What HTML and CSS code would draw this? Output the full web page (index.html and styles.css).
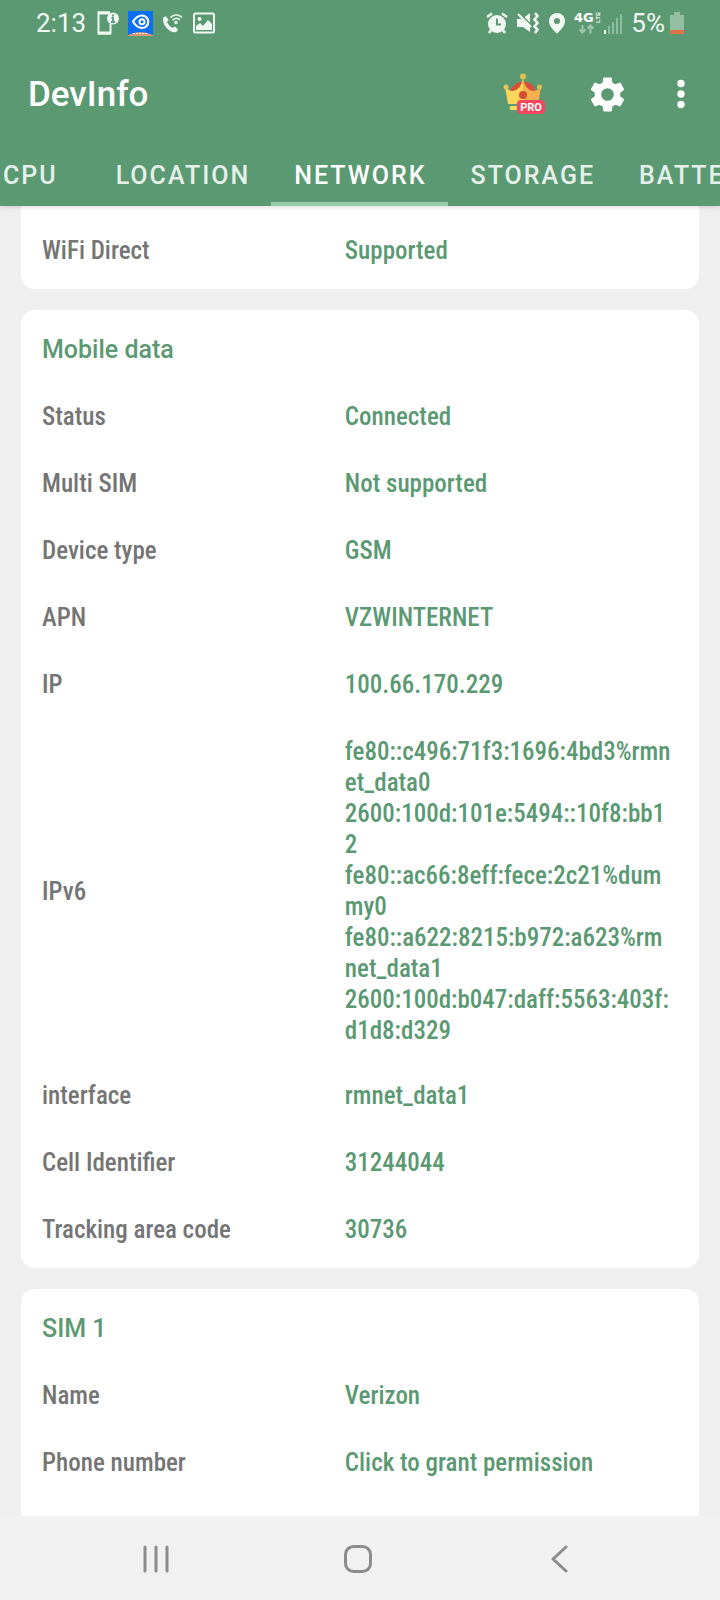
FILE: index.html
```
<!DOCTYPE html>
<html lang="en">
<head>
<meta charset="utf-8">
<meta name="viewport" content="width=device-width, initial-scale=1">
<title>DevInfo</title>
<link rel="stylesheet" href="styles.css">
</head>
<body>
<div class="screen">
  <header class="header">
    <div class="status">
      <span class="clock">2:13</span>
      <svg width="22" height="24" viewBox="0 0 22 24" aria-hidden="true"><path d="M13 1.500H1.500V22.500H13.500V13" fill="none" stroke="#f1f8f3" stroke-width="2"/><path d="M1 2H13M1 22H13" stroke="#f1f8f3" stroke-width="3"/><circle cx="16" cy="7.500" r="6" fill="#f1f8f3"/><path d="M16 3.500V5.500M14.500 7H16V11M14 11H18" stroke="#5b9973" stroke-width="1.800" fill="none"/></svg>
      <svg class="eye" width="25" height="25" viewBox="0 0 25 25" aria-hidden="true"><path d="M0 0H25V25H0Z" fill="#0a6ff2"/><path d="M5 10.500Q9 4.500 14 4.500A6 6 0 0 1 14 17Q9 17 5 10.500Z" fill="none" stroke="#fff" stroke-width="2.200"/><circle cx="14" cy="10.700" r="2.500" fill="none" stroke="#fff" stroke-width="2"/><path d="M0 25V24Q12 18 25 24V25Z" fill="#d99a76"/><path d="M5 22.500H20" stroke="#f5dccb" stroke-width="1" stroke-dasharray="2 1"/></svg>
      <svg class="call" width="21" height="20" viewBox="0 0 21 20" aria-hidden="true"><path d="M1.200 4.500 4 3.200 6.600 7.200 4.900 9.200Q7 13 10.600 15L12.700 13.400 16 16.200 14.600 18.800Q11 20.500 6.200 16.500 0 11 1.200 4.500Z" fill="#f1f8f3"/><g fill="none" stroke="#e0eee5" stroke-width="1.800"><path d="M8.500 4.500Q14-.500 20 4.200"/><path d="M10.500 7Q14 4 18 6.700"/></g><circle cx="14" cy="9.500" r="1.700" fill="#f1f8f3"/></svg>
      <svg width="22" height="22" viewBox="0 0 22 22" aria-hidden="true"><rect x="1" y="1.500" width="20" height="19" rx="1.500" fill="none" stroke="#f1f8f3" stroke-width="2"/><circle cx="6.500" cy="7" r="2" fill="#f1f8f3"/><path d="M3 18V14L7 11 10 14 15 8 19 12V18Z" fill="#f1f8f3"/></svg>
      <span class="spacer"></span>
      <svg width="22" height="22" viewBox="0 0 22 22" aria-hidden="true"><circle cx="11" cy="12" r="9" fill="#f1f8f3"/><path d="M1 5 6 1.500M21 5 16 1.500M5 18 3 21M17 18 19 21" stroke="#f1f8f3" stroke-width="2.500"/><path d="M11 6.500V12.500H15" stroke="#5b9973" stroke-width="2" fill="none"/></svg>
      <svg width="22" height="22" viewBox="0 0 22 22" aria-hidden="true"><path d="M0 7H5L13 1V20L6 15H0Z" fill="#f1f8f3"/><path d="M1 0 15 14" stroke="#5b9973" stroke-width="2"/><path d="M1 2 14 15" stroke="#f1f8f3" stroke-width="2.200"/><path d="M18 1 20.500 4 17.500 7.500 20.500 11 17.500 14.500 20.500 17.500 18 21" fill="none" stroke="#f1f8f3" stroke-width="2.500"/></svg>
      <svg class="pin" width="18" height="22" viewBox="0 0 18 22" aria-hidden="true"><path d="M9 1A8 8 0 0 0 1 9C1 14 5 18 9 21.500 13 18 17 14 17 9A8 8 0 0 0 9 1ZM9 6A3 3 0 1 1 9 12 3 3 0 0 1 9 6Z" fill="#f1f8f3" fill-rule="evenodd"/></svg>
      <svg class="lte" width="28" height="24" viewBox="0 0 28 24" aria-hidden="true"><text class="g4" x="0" y="11">4G</text><text class="g-lte" transform="translate(26 12) rotate(-90)">LTE</text><path d="M8.500 14V21M5.500 18.500 8.500 21.500 11.500 18.500M16.500 22.500V15M13.500 17.500 16.500 14.500 19.500 17.500" stroke="#9fc7ae" stroke-width="2" fill="none"/></svg>
      <svg width="18" height="21" viewBox="0 0 18 21" aria-hidden="true"><path d="M1 17V21" stroke="#fff" stroke-width="2"/><path d="M5 13V21M9 9V21M13 5V21M17 1V21" stroke="#8fbd9f" stroke-width="2"/></svg>
      <span class="percent">5%</span>
      <svg class="battery" width="14" height="22" viewBox="0 0 14 22" aria-hidden="true"><path d="M4 0H10V3H14V19H0V3H4Z" fill="#95bfa3"/><path d="M0 18H14V21Q14 22 13 22H1Q0 22 0 21Z" fill="#e07445"/></svg>
    </div>
    <div class="appbar">
      <h1 class="app-title">DevInfo</h1>
      <button class="icon-btn crown-btn" type="button" aria-label="Pro version">
        <svg width="42" height="42" viewBox="0 0 42 42" aria-hidden="true"><path d="M6 19Q12 8 20 8.500 29 8 34 19L30 28H9Z" fill="#d8503c"/><path d="M2 14 5 31H20V5Q18 17 10 18 6 18 2 14Z" fill="#fcd75b"/><path d="M38 14 35 31H20V5Q22 17 30 18 34 18 38 14Z" fill="#f4b04b"/><circle cx="20" cy="3.500" r="3" fill="#dfbf54"/><circle cx="3" cy="14" r="2.500" fill="#e5c75c"/><circle cx="36.500" cy="14" r="2.500" fill="#d9bd55"/><circle cx="20" cy="22" r="4" fill="#cf4f34"/><rect x="6.500" y="33" width="20" height="4" rx="2" fill="#f6dc61"/><rect x="14" y="27" width="28" height="14" rx="4" fill="#f5455f"/><text class="pro" x="28" y="38" text-anchor="middle">PRO</text></svg>
      </button>
      <button class="icon-btn gear-btn" type="button" aria-label="Settings">
        <svg width="41" height="41" viewBox="0 0 24 24" aria-hidden="true"><path fill="#fff" d="M19.430 12.980c.040-.320.070-.640.070-.980s-.030-.660-.070-.980l2.110-1.650c.190-.150.240-.420.120-.640l-2-3.460c-.120-.220-.390-.300-.610-.220l-2.490 1c-.520-.400-1.080-.730-1.690-.980l-.380-2.650C14.460 2.180 14.250 2 14 2h-4c-.250 0-.460.180-.490.420l-.380 2.650c-.610.250-1.170.590-1.690.980l-2.490-1c-.230-.090-.490 0-.610.220l-2 3.460c-.130.220-.070.490.120.640l2.110 1.650c-.040.320-.070.650-.070.980s.030.660.070.980l-2.110 1.650c-.190.150-.240.420-.120.640l2 3.460c.120.220.390.300.610.220l2.490-1c.520.400 1.080.730 1.690.980l.380 2.650c.030.240.240.420.490.420h4c.250 0 .460-.180.490-.420l.380-2.650c.610-.250 1.170-.590 1.690-.980l2.490 1c.230.090.490 0 .610-.220l2-3.460c.120-.220.070-.490-.120-.640l-2.110-1.650zM12 15.700A3.700 3.700 0 1 1 12 8.300 3.700 3.700 0 0 1 12 15.700z"/></svg>
      </button>
      <button class="icon-btn more-btn" type="button" aria-label="More options">
        <svg width="8" height="30" viewBox="0 0 8 30" aria-hidden="true"><g fill="#fff"><circle cx="4" cy="4.500" r="3.700"/><circle cx="4" cy="15" r="3.700"/><circle cx="4" cy="25.500" r="3.700"/></g></svg>
      </button>
    </div>
    <nav class="tabs" aria-label="Sections">
      <button class="tab tab-first" type="button">CPU</button>
      <button class="tab" type="button">LOCATION</button>
      <button class="tab tab-active" type="button" aria-current="page">NETWORK</button>
      <button class="tab" type="button">STORAGE</button>
      <button class="tab" type="button">BATTERY</button>
    </nav>
  </header>

  <main class="content">
    <section class="card card-top">
      <dl class="rows">
        <div class="row"><dt>WiFi Direct</dt><dd>Supported</dd></div>
      </dl>
    </section>
    <section class="card">
      <h2 class="card-title">Mobile data</h2>
      <dl class="rows">
        <div class="row"><dt>Status</dt><dd>Connected</dd></div>
        <div class="row"><dt>Multi SIM</dt><dd>Not supported</dd></div>
        <div class="row"><dt>Device type</dt><dd>GSM</dd></div>
        <div class="row"><dt>APN</dt><dd>VZWINTERNET</dd></div>
        <div class="row"><dt>IP</dt><dd>100.66.170.229</dd></div>
        <div class="row row-long"><dt>IPv6</dt><dd>fe80::c496:71f3:1696:4bd3%rmn<br>et_data0<br>2600:100d:101e:5494::10f8:bb1<br>2<br>fe80::ac66:8eff:fece:2c21%dum<br>my0<br>fe80::a622:8215:b972:a623%rm<br>net_data1<br>2600:100d:b047:daff:5563:403f:<br>d1d8:d329</dd></div>
        <div class="row"><dt>interface</dt><dd>rmnet_data1</dd></div>
        <div class="row"><dt>Cell Identifier</dt><dd>31244044</dd></div>
        <div class="row"><dt>Tracking area code</dt><dd>30736</dd></div>
      </dl>
    </section>
    <section class="card card-last">
      <h2 class="card-title">SIM 1</h2>
      <dl class="rows">
        <div class="row"><dt>Name</dt><dd>Verizon</dd></div>
        <div class="row"><dt>Phone number</dt><dd><button class="grant" type="button">Click to grant permission</button></dd></div>
      </dl>
    </section>
  </main>

  <footer class="navbar">
    <button class="icon-btn" type="button" aria-label="Recent apps"><svg width="28" height="28" viewBox="0 0 28 28" aria-hidden="true"><path d="M3 2V26M14 2V26M25 2V26" stroke="#8c8c8c" stroke-width="3" stroke-linecap="round"/></svg></button>
    <button class="icon-btn" type="button" aria-label="Home"><svg width="30" height="30" viewBox="0 0 30 30" aria-hidden="true"><rect x="2.500" y="2.500" width="25" height="25" rx="8" fill="none" stroke="#8c8c8c" stroke-width="3"/></svg></button>
    <button class="icon-btn" type="button" aria-label="Back"><svg width="28" height="28" viewBox="0 0 28 28" aria-hidden="true"><path d="M20 2 7 14 20 26" fill="none" stroke="#8c8c8c" stroke-width="3" stroke-linecap="round" stroke-linejoin="round"/></svg></button>
  </footer>
</div>
</body>
</html>
```

FILE: styles.css
```
* { box-sizing: border-box; }
body {
  margin: 0;
  background: #efefef;
  font-family: Roboto, "Liberation Sans", sans-serif;
}
h1, h2, dl, dd { margin: 0; }
button {
  border: 0;
  padding: 0;
  background: none;
  font: inherit;
  color: inherit;
}
svg { display: block; flex: none; }

.screen {
  display: flex;
  flex-direction: column;
  min-height: 100vh;
}

.header {
  background: #5b9973;
  color: #fff;
  box-shadow: 0 1px 4px rgba(0, 0, 0, .15);
  z-index: 1;
}
.status {
  display: flex;
  align-items: center;
  gap: 9px;
  height: 46px;
  padding: 0 36px;
  color: #f1f8f3;
  font-size: 26px;
}
.clock { margin-right: 2px; }
.call { margin-right: 1px; }
.spacer { flex: 1; }
.pin { margin-right: -1px; }
.lte { margin-right: -7px; }
.g4 { font: 700 13px "DejaVu Sans", sans-serif; fill: #fff; }
.g-lte { font: 700 6px "Liberation Sans", sans-serif; fill: #fff; }
.battery { margin-left: -4px; }
.pro { font: 700 11px Roboto, sans-serif; fill: #fff; }

.appbar {
  display: flex;
  align-items: center;
  height: 96px;
  padding: 0 35px 0 28px;
}
.app-title {
  flex: 1;
  font-size: 35px;
  font-weight: 500;
}
.icon-btn {
  display: flex;
  align-items: center;
  justify-content: center;
}
.gear-btn { margin: 0 49px 0 42px; }

.tabs {
  display: flex;
  height: 64px;
  overflow: hidden;
}
.tab {
  flex: none;
  height: 64px;
  padding: 6px 21px 0 23px;
  border-bottom: 4px solid transparent;
  color: #e6f0ea;
  font-size: 25px;
  font-weight: 500;
  letter-spacing: 2px;
}
.tab-first { padding: 6px 35px 0 3px; }
.tab-active {
  border-color: #97ccae;
  color: #fff;
}

.content {
  display: flex;
  flex: 1;
  flex-direction: column;
  gap: 21px;
  padding: 0 21px;
}
.card {
  padding: 6px 21px 5px;
  border-radius: 14px;
  background: #fff;
}
.card-top {
  padding-top: 11px;
  border-radius: 0 0 14px 14px;
}
.card-last {
  flex: 1;
  border-radius: 14px 14px 0 0;
}
.card-title {
  padding: 18px 0;
  color: #5b9973;
  font-size: 25px;
  font-weight: 500;
  line-height: 31px;
}
.row {
  display: grid;
  grid-template-columns: 10fr 11fr;
  align-items: center;
  padding: 18px 0;
  color: #757575;
  font-family: "Roboto Condensed", Roboto, sans-serif;
  font-size: 25px;
  font-weight: 500;
  line-height: 31px;
}
.row dd {
  min-width: 0;
  color: #5b9973;
  white-space: nowrap;
}
.row-long { padding: 18px 0 16px; }
.grant { display: block; }

.navbar {
  display: flex;
  justify-content: space-around;
  align-items: center;
  height: 84px;
  padding: 2px 60px 0 56px;
  background: #f1f1f1;
}
```
